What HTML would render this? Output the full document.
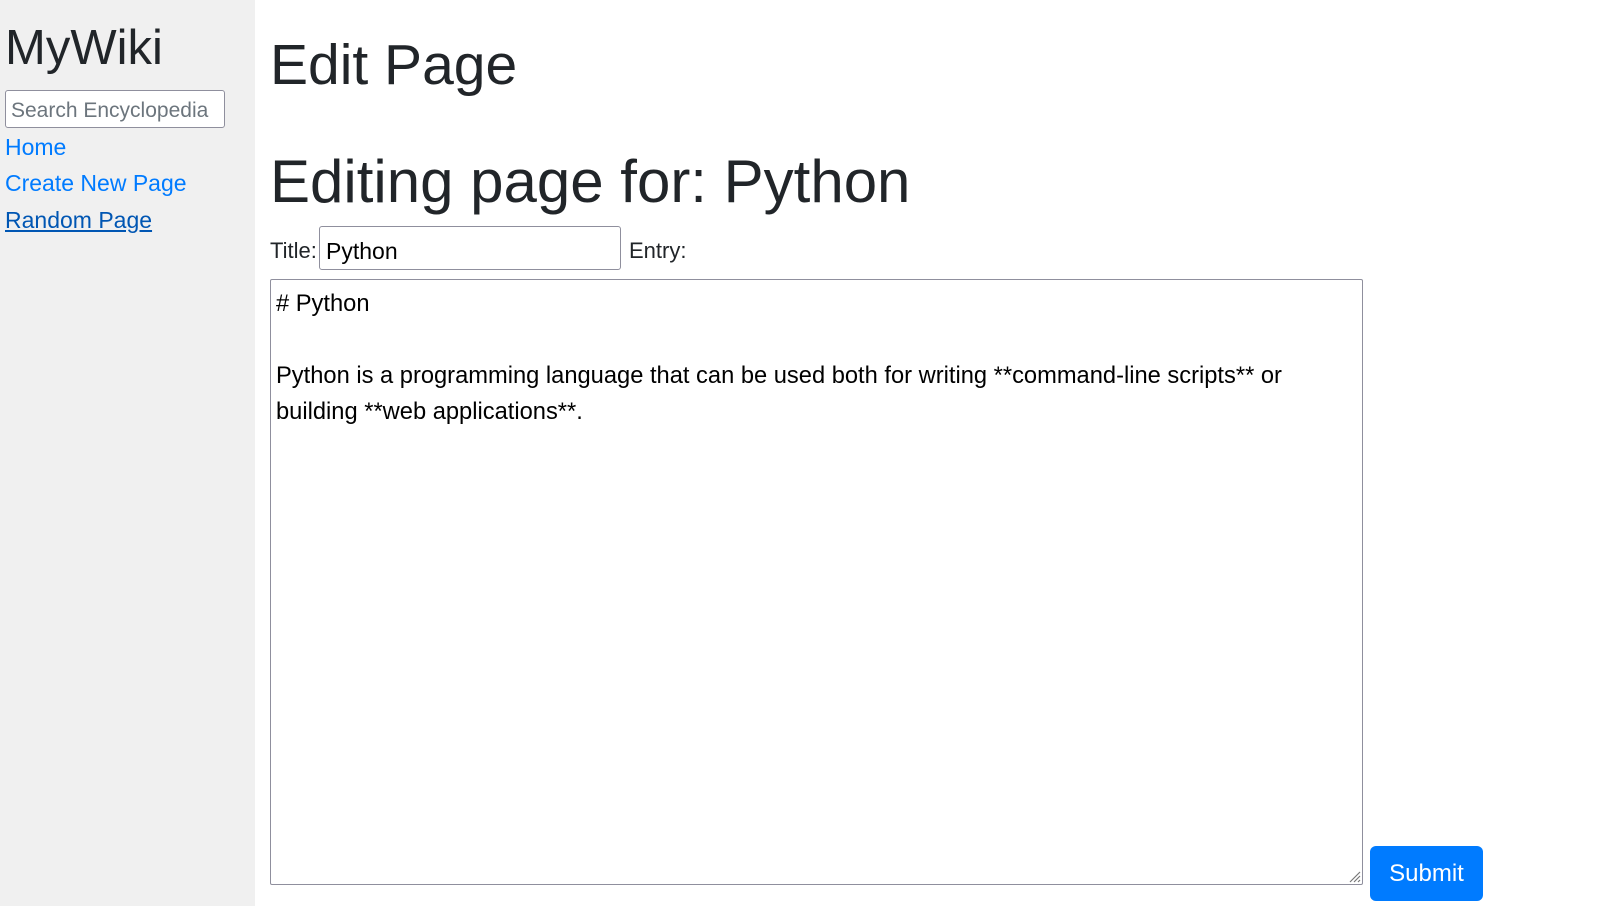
<!DOCTYPE html>
<html><head><meta charset="utf-8"><style>
html,body{margin:0;padding:0;width:1617px;height:906px;overflow:hidden;background:#fff;font-family:"Liberation Sans",sans-serif;color:#212529}
.side{position:absolute;left:0;top:0;width:255px;height:906px;background:#f0f0f0}
.abs{position:absolute;white-space:nowrap;line-height:1}
a{color:#007bff;text-decoration:none}
.box{position:absolute;border:1px solid #8f8f9d;border-radius:3px;background:#fff;box-sizing:border-box}
</style></head><body>
<div class="side">
<div class="abs" style="left:5px;top:24px;font-size:49px">MyWiki</div>
<div class="box" style="left:5px;top:90px;width:220px;height:38px"></div>
<div class="abs" style="left:11px;top:100px;font-size:21px;color:#6c757d">Search Encyclopedia</div>
<div class="abs" style="left:5px;top:136px;font-size:23px"><a>Home</a></div>
<div class="abs" style="left:5px;top:172px;font-size:23px"><a>Create New Page</a></div>
<div class="abs" style="left:5px;top:209px;font-size:23px"><a style="text-decoration:underline;color:#0056b3">Random Page</a></div>
</div>
<div class="abs" style="left:270px;top:37px;font-size:57px">Edit Page</div>
<div class="abs" style="left:270px;top:152px;font-size:60px">Editing page for: Python</div>
<div class="abs" style="left:270px;top:240px;font-size:22px">Title:</div>
<div class="box" style="left:319px;top:226px;width:302px;height:44px"></div>
<div class="abs" style="left:326px;top:240px;font-size:23px;color:#000">Python</div>
<div class="abs" style="left:629px;top:240px;font-size:22px">Entry:</div>
<div class="box" style="left:270px;top:279px;width:1093px;height:606px;border-radius:2px"></div>
<div class="abs" style="left:276px;top:293px;font-size:23.7px;color:#000">#&nbsp;Python</div>
<div class="abs" style="left:276px;top:365px;font-size:23.7px;color:#000">Python is a programming language that can be used both for writing **command-line scripts** or</div>
<div class="abs" style="left:276px;top:401px;font-size:23.7px;color:#000">building **web applications**.</div>
<svg class="abs" style="left:1347px;top:869px" width="14" height="14"><path d="M13 3L3 13M13 7L7 13M13 11L11 13" stroke="#777" stroke-width="1.2"/></svg>
<div class="abs" style="left:1370px;top:846px;width:113px;height:55px;background:#007bff;border-radius:6px;color:#fff;font-size:24px;line-height:55px;text-align:center">Submit</div>
</body></html>
